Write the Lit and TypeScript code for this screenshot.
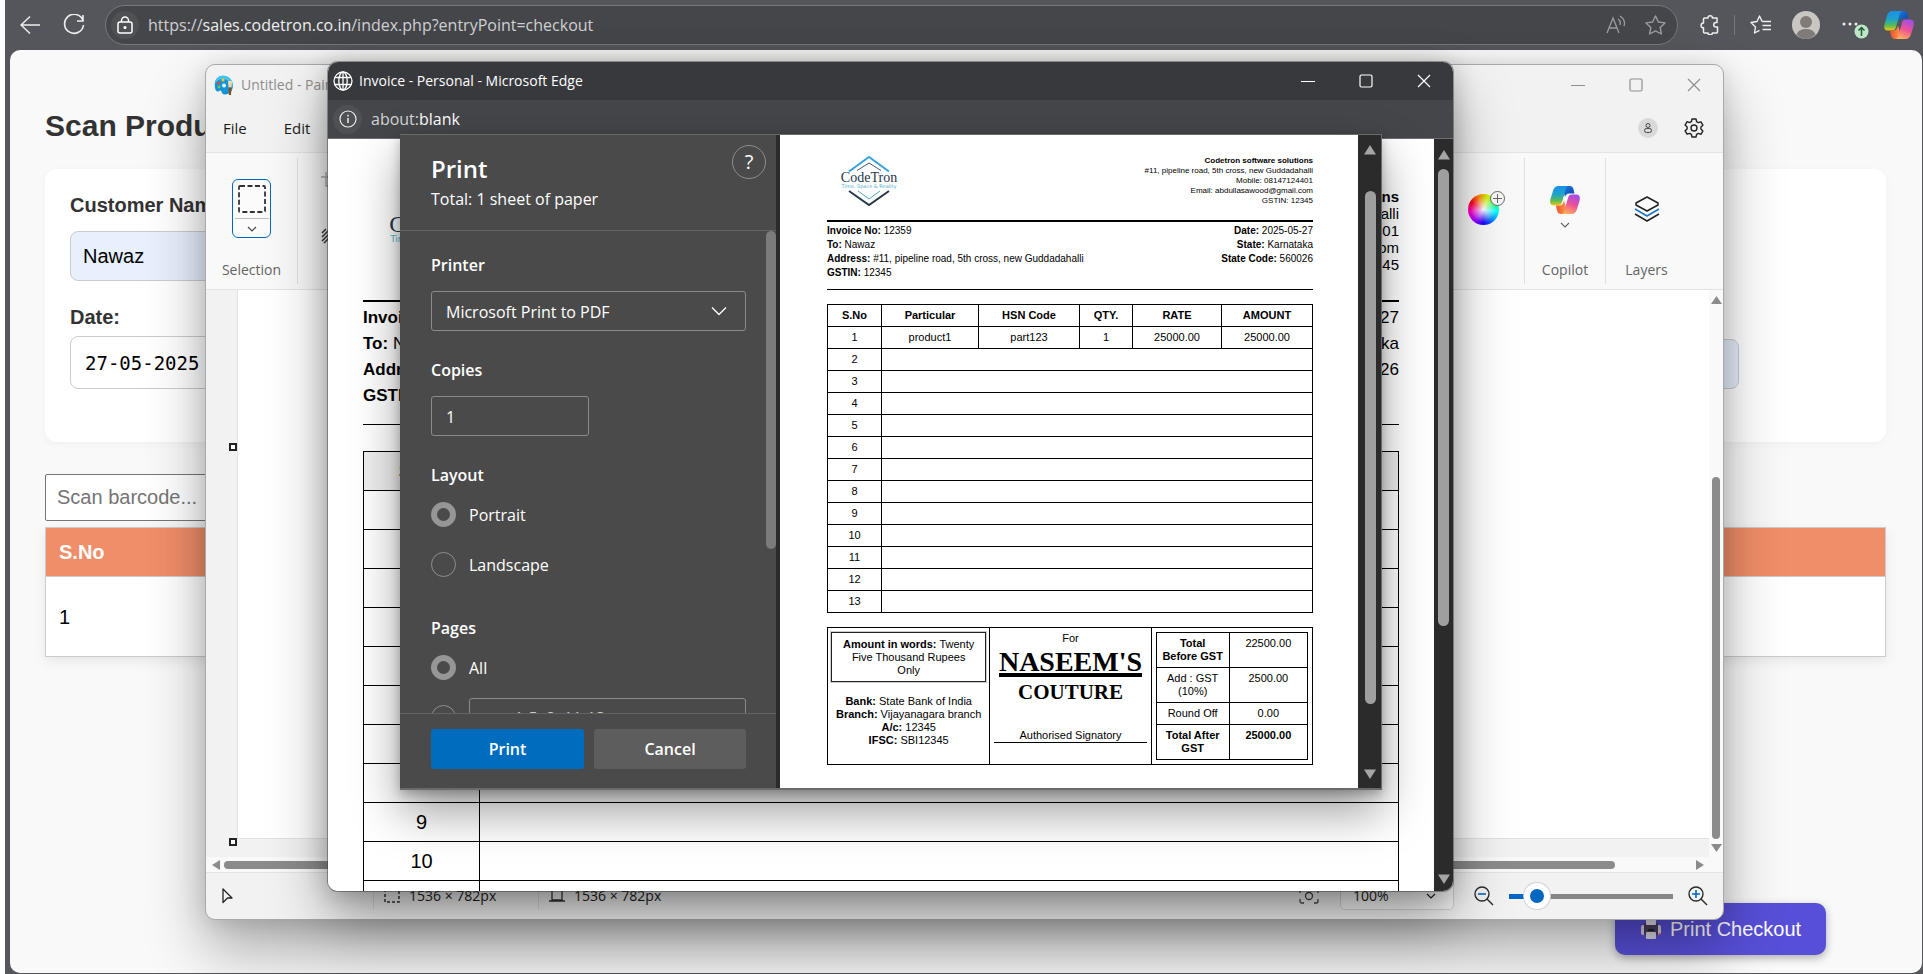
import { LitElement, html, css } from "lit";
import { customElement, property } from "lit/decorators.js";

const UI = css`"Open Sans", "Noto Sans", sans-serif`;
const ARIAL = css`"Liberation Sans", Arial, sans-serif`;

const chevron = html`<svg width="18" height="18" viewBox="0 0 18 18" fill="none" stroke="currentColor" stroke-width="1.3"><path d="M2 5.5l7 7 7-7"/></svg>`;
const smallChevron = html`<svg width="10" height="10" viewBox="0 0 10 10" fill="none" stroke="currentColor" stroke-width="1.2"><path d="M1 3l4 4 4-4"/></svg>`;

const copilot = (id: string) => html`<svg width="30" height="28" viewBox="0 0 30 28">
  <defs>
    <linearGradient id="${id}a" x1="0" y1="0" x2="0" y2="1"><stop offset="0" stop-color="#1a8fe8"/><stop offset=".45" stop-color="#1fa5c4"/><stop offset=".75" stop-color="#5bbb55"/><stop offset="1" stop-color="#f2c811"/></linearGradient>
    <linearGradient id="${id}b" x1=".7" y1="0" x2=".3" y2="1"><stop offset="0" stop-color="#a34be8"/><stop offset=".5" stop-color="#ee5296"/><stop offset="1" stop-color="#ffb357"/></linearGradient>
    <linearGradient id="${id}c" x1="0" y1="0" x2="1" y2="1"><stop offset="0" stop-color="#1a7fe0"/><stop offset="1" stop-color="#0f3fa8"/></linearGradient>
    <linearGradient id="${id}d" x1="0" y1="0" x2="1" y2="0"><stop offset="0" stop-color="#f0512e"/><stop offset="1" stop-color="#ffa24d"/></linearGradient>
  </defs>
  <path fill="url(#${id}c)" d="M12 0h8c3 0 3.600 3 4.500 7.500h-5c-3 0-4 2-4.500 3.500z"/>
  <path fill="url(#${id}a)" d="M9 0h10c-2.500 0-3 2-4 6l-3 10c-.7 2.400-1.600 3.500-4 3.500H4c-4 0-4.300-3-3.500-6.500L3 5C4 1.500 5.500 0 9 0z"/>
  <path fill="url(#${id}d)" d="M18 28h-7c-3.500 0-4-3-5-8.500h3c3.500 0 4-2 5-5z"/>
  <path fill="url(#${id}b)" d="M21 28H11c2.500 0 3-2 4-6l3-10c.7-2.400 1.600-3.500 4-3.500h4c4 0 4.300 3 3.500 6.500L27 23c-1 3.500-2.500 5-6 5z"/>
</svg>`;

const logo = html`<svg class="logo" viewBox="0 0 60 50" role="img" aria-label="CodeTron">
  <g fill="none">
    <path d="M10 15.500L30 1l20 14.500" stroke="#36a3dc" stroke-width="2"/>
    <path d="M18 14.500L30 7l12 7.500" stroke="#44576a" stroke-width="1"/>
    <path d="M10 35l20 14 20-14" stroke="#26384a" stroke-width="2"/>
    <path d="M19 35l11 8 11-8" stroke="#4ba5c9" stroke-width="1"/>
  </g>
  <text x="30" y="26" text-anchor="middle" font-family="Liberation Serif, serif" font-size="14" fill="#26384a">CodeTron</text>
  <text x="30" y="32" text-anchor="middle" font-family="DejaVu Sans, sans-serif" font-size="5" fill="#4fb3cc">Time, Space &amp; Reality</text>
</svg>`;

@customElement("invoice-sheet")
class InvoiceSheet extends LitElement {
  @property({ type: Boolean, reflect: true }) large = false;

  static styles = css`
    :host { display: block; background: #fff; color: #000; font-family: ${ARIAL}; padding: 21px 45px 0 47px; }
    .head { display: flex; justify-content: space-between; border-bottom: 2px solid #000; padding: 0 0 14px 12px; }
    .logo { width: 60px; height: 50px; overflow: visible; }
    .company { text-align: right; font-size: 8px; line-height: 10px; }
    .info { display: flex; justify-content: space-between; font-size: 10px; line-height: 14px; padding: 2px 0 9px 0; border-bottom: 1px solid #000; }
    .right { text-align: right; }
    table { border-collapse: collapse; width: 100%; table-layout: fixed; }
    .items { margin-top: 14px; font-size: 11px; }
    .items th, .items td { border: 1px solid #000; height: 22px; padding: 0; text-align: center; box-sizing: border-box; line-height: 13px; }
    .c1 { width: 54px; } .c2 { width: 97px; } .c3 { width: 101px; } .c4 { width: 53px; } .c5 { width: 89px; }
    .foot { display: grid; grid-template-columns: 1fr 1fr 1fr; margin-top: 14px; border: 1px solid #000; font-size: 11px; line-height: 13px; text-align: center; }
    .foot > div + div { border-left: 1px solid #000; }
    .words { border: 1px solid #222; margin: 4px 3px 13px; padding: 5px 8px 4px; box-shadow: 0 0 0 1px #ccc; }
    .sign { display: flex; flex-direction: column; align-items: center; padding: 4px 4px 0; }
    .brand { font: bold 28px/28px "Liberation Serif", serif; border-bottom: 4px solid #000; height: 25px; margin-top: 3px; }
    .sub { font: bold 21px/26px "Liberation Serif", serif; margin-top: 2px; }
    .auth { align-self: stretch; border-bottom: 1px solid #000; margin-top: 24px; }
    .sums { padding: 4px; font-size: 11px; }
    .sums td, .sums th { border: 1px solid #000; padding: 4px 0; vertical-align: top; }
    .sums th:first-child { padding: 4px 2px; }
    .s1 { width: 73px; }

    :host([large]) { padding: 49px 35px 0 35px; }
    :host([large]) .head { padding: 0 0 27px 23px; }
    :host([large]) .logo { width: 102px; height: 85px; }
    :host([large]) .company { font-size: 15px; line-height: 17px; }
    :host([large]) .info { font-size: 17px; line-height: 26px; padding: 3px 0 15px 0; }
    :host([large]) .items { margin-top: 26px; font-size: 20px; }
    :host([large]) .items th, :host([large]) .items td { height: 39px; line-height: 22px; }
    :host([large]) .items th { background: #efefef; }
    :host([large]) .c1 { width: 116px; }
    :host([large]) .c2, :host([large]) .c3, :host([large]) .c4, :host([large]) .c5 { width: auto; }
  `;

  render() {
    const blanks = Array.from({ length: this.large ? 10 : 12 }, (_, i) => i + 2);
    return html`
      <div class="head">
        ${logo}
        <div class="company"><b>Codetron software solutions</b><br>#11, pipeline road, 5th cross, new Guddadahalli<br>Mobile: 08147124401<br>Email: abdullasawood@gmail.com<br>GSTIN: 12345</div>
      </div>
      <div class="info">
        <div><b>Invoice No:</b> 12359<br><b>To:</b> Nawaz<br><b>Address:</b> #11, pipeline road, 5th cross, new Guddadahalli<br><b>GSTIN:</b> 12345</div>
        <div class="right"><b>Date:</b> 2025-05-27<br><b>State:</b> Karnataka<br><b>State Code:</b> 560026</div>
      </div>
      <table class="items">
        <colgroup><col class="c1"><col class="c2"><col class="c3"><col class="c4"><col class="c5"><col></colgroup>
        <tr><th>S.No</th><th>Particular</th><th>HSN Code</th><th>QTY.</th><th>RATE</th><th>AMOUNT</th></tr>
        <tr><td>1</td><td>product1</td><td>part123</td><td>1</td><td>25000.00</td><td>25000.00</td></tr>
        ${blanks.map((n) => html`<tr><td>${n}</td><td colspan="5"></td></tr>`)}
      </table>
      ${this.large ? "" : html`
        <div class="foot">
          <div>
            <div class="words"><b>Amount in words:</b> Twenty Five Thousand Rupees Only</div>
            <b>Bank:</b> State Bank of India<br><b>Branch:</b> Vijayanagara branch<br><b>A/c:</b> 12345<br><b>IFSC:</b> SBI12345
          </div>
          <div class="sign"><span>For</span><span class="brand">NASEEM'S</span><span class="sub">COUTURE</span><span class="auth">Authorised Signatory</span></div>
          <div class="sums">
            <table>
              <colgroup><col class="s1"><col></colgroup>
              <tr><th>Total<br>Before GST</th><td>22500.00</td></tr>
              <tr><td>Add : GST (10%)</td><td>2500.00</td></tr>
              <tr><td>Round Off</td><td>0.00</td></tr>
              <tr><th>Total After GST</th><th>25000.00</th></tr>
            </table>
          </div>
        </div>`}
    `;
  }
}

const controls = html`
  <div class="controls">
    <button aria-label="Minimize"><svg width="14" height="16" viewBox="0 0 14 16"><path d="M0 8.500h14"/></svg></button>
    <button aria-label="Maximize"><svg width="14" height="16" viewBox="0 0 14 16"><rect x="1" y="2" width="12" height="12" rx="1.500"/></svg></button>
    <button aria-label="Close"><svg width="14" height="16" viewBox="0 0 14 16"><path d="M1 2l12 12M13 2L1 14"/></svg></button>
  </div>`;

const windowStyles = css`
  button { font: inherit; color: inherit; background: none; border: 0; padding: 0; margin: 0; }
  svg { display: block; flex: none; }
  .controls { display: flex; margin-left: auto; }
  .controls button { width: 58px; display: grid; place-items: center; }
  .controls svg { fill: none; stroke: currentColor; stroke-width: 1.2; }
`;

@customElement("print-dialog")
class PrintDialog extends LitElement {
  static styles = [windowStyles, css`
    :host { display: flex; box-sizing: border-box; border: 1px solid #6a6a6a; border-width: 1px 1px 2px 0; background: #2b2b2b; color: #fff; font: 16px/24px ${UI}; }
    .panel { width: 376px; flex: none; background: #4a4a4a; display: flex; flex-direction: column; }
    .top { display: flex; justify-content: space-between; padding: 10px 10px 0 31px; height: 96px; box-sizing: border-box; border-bottom: 1px solid #636363; }
    h1 { font-size: 24px; line-height: 30px; font-weight: 600; margin: 9px 0 0; }
    p { margin: 0; line-height: 30px; }
    .help { width: 34px; height: 34px; border: 1px solid #8d8d8d; border-radius: 50%; font-size: 20px; line-height: 30px; flex: none; }
    .scroll { flex: 1; min-height: 0; overflow: hidden; display: flex; justify-content: space-between; }
    .fields { width: 315px; padding: 22px 0 0 31px; }
    .track { width: 10px; }
    .thumb { width: 10px; height: 318px; border-radius: 5px; background: #7b7b7b; }
    .name { display: block; font-weight: 600; margin: 0 0 14px; padding: 0; }
    fieldset { border: 0; margin: 0; padding: 0; }
    .box { display: block; box-sizing: border-box; height: 40px; width: 100%; border: 1px solid #8b8b8b; border-radius: 3px; background: transparent; color: #fff; font: inherit; padding: 1px 14px 0; appearance: none; outline: 0; margin: 0; }
    .box::placeholder { color: #c8c8c8; opacity: 1; }
    .drop { display: grid; margin-bottom: 27px; }
    .drop > * { grid-area: 1 / 1; }
    .drop svg { justify-self: end; align-self: center; margin-right: 18px; pointer-events: none; }
    .copies { width: 158px; margin-bottom: 27px; }
    .opts { display: flex; flex-direction: column; gap: 25px; }
    .opt { display: flex; align-items: center; gap: 13px; height: 25px; }
    legend.name { margin-bottom: 15px; }
    input[type="radio"] { appearance: none; width: 25px; height: 25px; margin: 0; border: 1px solid #8f8f8f; border-radius: 50%; flex: none; box-sizing: border-box; }
    input[type="radio"]:checked { border: 6px solid #969696; }
    .pages { margin-top: 39px; }
    .foot { display: grid; grid-template-columns: 153px 152px; gap: 10px; padding: 15px 0 19px 31px; border-top: 1px solid #636363; }
    .foot button { height: 40px; border-radius: 3px; background: #5d5d5d; font-weight: 600; }
    .foot .go { background: #006cbe; }
    .preview { flex: 1; min-width: 0; margin-left: 4px; background: #fff; overflow: hidden; }
    .bar { width: 23px; flex: none; display: flex; flex-direction: column; align-items: center; padding: 10px 0 9px 1px; box-sizing: border-box; }
    .grip { width: 11px; flex: 1; border-radius: 6px; background: #9f9f9f; margin: 36px 0 65px; }
  `];

  render() {
    return html`
      <section class="panel">
        <div class="top"><div><h1>Print</h1><p>Total: 1 sheet of paper</p></div><button class="help" aria-label="Help">?</button></div>
        <div class="scroll">
          <div class="fields">
            <label class="name" for="printer">Printer</label>
            <div class="drop"><select class="box" id="printer"><option>Microsoft Print to PDF</option></select>${chevron}</div>
            <label class="name" for="copies">Copies</label>
            <input class="box copies" id="copies" value="1">
            <fieldset>
              <legend class="name">Layout</legend>
              <div class="opts">
                <label class="opt"><input type="radio" name="layout" checked>Portrait</label>
                <label class="opt"><input type="radio" name="layout">Landscape</label>
              </div>
            </fieldset>
            <fieldset class="pages">
              <legend class="name">Pages</legend>
              <div class="opts">
                <label class="opt"><input type="radio" name="pages" checked>All</label>
                <div class="opt"><input type="radio" name="pages" aria-label="Page range"><input class="box" aria-label="Pages" placeholder="e.g. 1-5, 8, 11-13"></div>
              </div>
            </fieldset>
          </div>
          <div class="track"><div class="thumb"></div></div>
        </div>
        <div class="foot"><button class="go">Print</button><button>Cancel</button></div>
      </section>
      <div class="preview"><invoice-sheet></invoice-sheet></div>
      <div class="bar">
        <svg width="12" height="10"><path fill="#a5a5a5" d="M6 0l6 9.500H0z"/></svg>
        <div class="grip"></div>
        <svg width="12" height="10"><path fill="#a5a5a5" d="M6 10l6-9.500H0z"/></svg>
      </div>`;
  }
}

@customElement("popup-window")
class PopupWindow extends LitElement {
  static styles = [windowStyles, css`
    :host { display: flex; flex-direction: column; border-radius: 10px; overflow: hidden; background: #fff; color: #fff; font: 14px/20px ${UI}; }
    .title { display: flex; height: 38px; flex: none; background: #38393d; padding-left: 5px; }
    .title > svg, .title > span { align-self: center; }
    .title > span { margin-left: 6px; }
    .addr { display: flex; align-items: center; height: 39px; flex: none; background: #45464a; border-bottom: 1px solid #6d6e72; padding-left: 5px; font-size: 16px; box-sizing: border-box; }
    .disc { width: 29px; height: 29px; border-radius: 50%; background: #4f5054; display: grid; place-items: center; margin-right: 9px; }
    .dim { color: #d4d4d6; }
    .body { flex: 1; min-height: 0; display: flex; }
    .page { flex: 1; min-width: 0; overflow: hidden; }
    .bar { width: 19px; flex: none; background: #2b2b2b; display: flex; flex-direction: column; align-items: center; padding: 11px 0 7px; box-sizing: border-box; }
    .grip { width: 11px; height: 457px; border-radius: 6px; background: #9f9f9f; margin: 9px 0 auto; }
    print-dialog { position: absolute; inset: 72px 71px 101px 72px; box-shadow: 0 22px 44px rgba(0, 0, 0, 0.38), 0 4px 10px rgba(0, 0, 0, 0.25); }
  `];

  render() {
    return html`
      <div class="title">
        <svg width="20" height="20" viewBox="0 0 20 20" fill="none" stroke="#fff" stroke-width="1.300"><circle cx="10" cy="10" r="9"/><ellipse cx="10" cy="10" rx="4.200" ry="9"/><path d="M2 6.500h16M2 13.500h16M10 1v18"/></svg>
        <span>Invoice - Personal - Microsoft Edge</span>
        ${controls}
      </div>
      <div class="addr">
        <span class="disc"><svg width="18" height="18" viewBox="0 0 18 18" fill="none" stroke="#eee" stroke-width="1.200"><circle cx="9" cy="9" r="8"/><path d="M9 8v5M9 4.800v1.600" stroke-width="1.500"/></svg></span>
        <span class="dim">about:</span><span>blank</span>
      </div>
      <div class="body">
        <div class="page"><invoice-sheet large></invoice-sheet></div>
        <div class="bar">
          <svg width="12" height="10"><path fill="#a5a5a5" d="M6 0l6 9.500H0z"/></svg>
          <div class="grip"></div>
          <svg width="12" height="10"><path fill="#a5a5a5" d="M6 10l6-9.500H0z"/></svg>
        </div>
      </div>
      <print-dialog></print-dialog>`;
  }
}

const magnifier = (plus: boolean) => html`<svg width="20" height="20" viewBox="0 0 20 20" fill="none" stroke="#2b2b2b" stroke-width="1.400"><circle cx="8" cy="8" r="7"/><path d="M13 13l6 6"/><path stroke="#0067c0" stroke-width="1.600" d="${plus ? "M4 8h8M8 4v8" : "M4 8h8"}"/></svg>`;

@customElement("paint-window")
class PaintWindow extends LitElement {
  static styles = [windowStyles, css`
    :host { display: flex; flex-direction: column; box-sizing: border-box; border: 1px solid #a9a9a9; border-radius: 10px; overflow: hidden; background: #f2f2f2; color: #1c1c1c; font: 14px/20px ${UI}; }
    .title { display: flex; height: 39px; flex: none; color: #8e8e8e; padding-left: 8px; }
    .title > svg, .title > span { align-self: center; }
    .title > span { margin-left: 7px; }
    .menu { display: flex; align-items: center; height: 49px; flex: none; padding: 0 19px 0 17px; gap: 37px; font-size: 15px; border-bottom: 1px solid #e4e4e4; box-sizing: border-box; }
    .user { margin-left: auto; width: 20px; height: 20px; border-radius: 50%; background: #d9d9d9; display: grid; place-items: center; }
    .menu .gear { margin-left: -11px; }
    .ribbon { display: flex; height: 137px; flex: none; background: #f9f9f9; border-bottom: 1px solid #e4e4e4; box-sizing: border-box; color: #646464; padding: 5px 0; }
    .group { display: flex; flex-direction: column; align-items: center; border-right: 1px solid #e0e0e0; box-sizing: border-box; padding: 21px 0 4px; width: 81px; }
    .group > span { margin-top: auto; }
    .group.first { width: 92px; }
    .group.last { border: 0; margin-right: 36px; }
    .select { box-sizing: border-box; width: 39px; height: 59px; border: 1px solid #0067c0; border-radius: 6px; display: grid; grid-template-rows: 38px 1fr; place-items: center; color: #444; background: #fbfbfb; }
    .select svg:last-child { border-top: 1px solid #bbb; padding: 5px 12px 3px; }
    .image { width: 40px; margin-left: 23px; padding-top: 14px; display: grid; align-content: start; gap: 38px; }
    .colours { width: 76px; margin-left: auto; border-right: 1px solid #e0e0e0; padding-top: 36px; box-sizing: border-box; padding-left: 19px; }
    .wheel { width: 31px; height: 31px; border-radius: 50%; background: radial-gradient(circle, #fff 0, rgba(255, 255, 255, 0) 60%), conic-gradient(from 20deg, #cf0, #3f6, #0ff, #08f, #20f, #a0f, #f0c, #f02, #f80, #cf0); }
    .add { position: relative; float: right; margin: -3px 19px 0 0; }
    .group.cop { padding-top: 28px; gap: 6px; }
    .group.lay { padding-top: 38px; color: #222; }
    .lay > span { color: #646464; }
    .work { flex: 1; min-height: 0; display: flex; }
    .gutter { width: 31px; flex: none; display: flex; flex-direction: column; align-items: flex-end; justify-content: space-between; padding-top: 153px; }
    .canvasrow { flex: 1; display: flex; flex-direction: column; }
    .canvas { flex: 1; background: #fff; border-left: 1px solid #e2e2e2; border-bottom: 1px solid #e2e2e2; margin-bottom: 18px; }
    .handle { width: 8px; height: 8px; border: 2px solid #222; background: #fff; box-sizing: border-box; }
    .handle.end { margin-bottom: 11px; }
    .vbar { width: 14px; flex: none; display: flex; flex-direction: column; align-items: center; padding: 6px 0 5px; background: #f9f9f9; }
    .vbar .grip { width: 8px; flex: 1; border-radius: 4px; background: #8b8b8b; margin: 173px 0 5px; }
    .hbar { display: flex; align-items: center; height: 15px; flex: none; background: #f9f9f9; border-bottom: 1px solid #e4e4e4; padding: 0 19px 0 6px; gap: 4px; }
    .hbar .grip { height: 8px; flex: 1; border-radius: 4px; background: #8b8b8b; margin-right: 77px; }
    .status { display: flex; align-items: center; height: 46px; flex: none; padding: 0 15px; box-sizing: border-box; }
    .status .size { display: flex; align-items: center; gap: 9px; border-left: 1px solid #ddd; padding: 4px 0 4px 10px; width: 154px; }
    .ptr { width: 152px; }
    .zoom { display: flex; align-items: center; margin-left: auto; }
    .pct { display: grid; width: 114px; margin: 0 20px 8px 21px; }
    .pct > * { grid-area: 1 / 1; }
    .pct select { appearance: none; font: inherit; color: inherit; background: #fafafa; border: 1px solid #d5d5d5; border-radius: 5px; height: 36px; padding: 8px 12px 0; margin: 0; }
    .pct svg { justify-self: end; align-self: center; margin: 8px 18px 0 0; }
    input { appearance: none; width: 164px; height: 26px; margin: 0 15px; background: linear-gradient(to right, #0067c0 28px, #868686 28px) center / 100% 5px no-repeat; }
    input::-webkit-slider-thumb { appearance: none; box-sizing: border-box; width: 26px; height: 26px; border-radius: 50%; border: 6px solid #fff; background: #0067c0; box-shadow: 0 0 0 1px #d2d2d2; }
  `];

  render() {
    return html`
      <div class="title">
        <svg width="20" height="20" viewBox="0 0 20 20"><path fill="#1593d8" d="M11 1C6 -.5 1 3 .8 9c0 4 .5 6.500 2.200 7.500 1.500.6 2-1.500 3.500-1 2 .8.500 4 4.500 4 5 0 8-4 7.800-9C18.600 5.500 16 2 11 1z"/><path fill="#43c3f5" d="M11 1C6 -.5 1 3 .8 9q3-5 8-5t10 6C18.600 5.500 16 2 11 1z"/><circle cx="4.500" cy="8" r="1.600" fill="#e5483d"/><circle cx="9" cy="5" r="1.600" fill="#f8c51c"/><circle cx="5" cy="12" r="1.400" fill="#6ccb4a"/><circle cx="10" cy="10.500" r="2" fill="#e8f6ff"/><path d="M14 6h4l-.5 6.500h-3z" fill="#f4d9a4"/><path d="M14.500 12.500h3L17 20h-2z" fill="#8d4d18"/></svg>
        <span>Untitled - Paint</span>
        ${controls}
      </div>
      <div class="menu">
        <button>File</button><button>Edit</button>
        <span class="user"><svg width="8" height="10" viewBox="0 0 8 10" fill="none" stroke="#444"><circle cx="4" cy="2.500" r="2"/><rect x=".5" y="5.500" width="7" height="4" rx="2"/></svg></span>
        <button class="gear" aria-label="Settings"><svg width="20" height="20" viewBox="0 0 20 20" fill="none" stroke="#222" stroke-width="1.400" stroke-linejoin="round"><path d="M8 1h4l.6 2.700 1.700 1 2.600-.9 2 3.400-2 1.900v1.900l2 1.900-2 3.400-2.600-.9-1.700 1L12 19H8l-.6-2.700-1.700-1-2.600.9-2-3.400 2-1.900V9l-2-1.900 2-3.400 2.600.9 1.700-1z"/><circle cx="10" cy="10" r="3"/></svg></button>
      </div>
      <div class="ribbon">
        <div class="group first">
          <button class="select" aria-label="Selection tool"><svg width="28" height="28" viewBox="0 0 28 28" fill="none" stroke="#333" stroke-width="1.800" stroke-dasharray="5 2.500"><rect x="1" y="1" width="26" height="26" rx="1"/></svg>${smallChevron}</button>
          <span>Selection</span>
        </div>
        <div class="image">
          <svg width="20" height="18" viewBox="0 0 20 18" fill="none" stroke="#aaa" stroke-width="1.400"><path d="M0 5h15v12M5 0v14h14"/></svg>
          <svg width="20" height="16" viewBox="0 0 20 16" stroke="#333" stroke-width="1.500"><path d="M1 5l4-4M1 9l8-8M1 13L13 1M3 15L17 1"/></svg>
        </div>
        <div class="colours">
          <svg class="add" width="15" height="15" viewBox="0 0 15 15" fill="#f9f9f9" stroke="#666"><circle cx="7.500" cy="7.500" r="7"/><path d="M7.500 3v9M3 7.500h9"/></svg>
          <div class="wheel"></div>
        </div>
        <div class="group cop">${copilot("p")}${smallChevron}<span>Copilot</span></div>
        <div class="group last lay">
          <svg width="26" height="26" viewBox="0 0 26 26" fill="none" stroke-width="1.500" stroke-linejoin="round"><path stroke="#222" d="M13 1l11 6v2l-11 6L2 9V7z"/><path stroke="#1a73c9" d="M1 13l12 7 12-7"/><path stroke="#222" d="M1 18l12 7 12-7"/></svg>
          <span>Layers</span>
        </div>
      </div>
      <div class="work">
        <div class="gutter"><div class="handle"></div><div class="handle end"></div></div>
        <div class="canvasrow"><div class="canvas"></div></div>
        <div class="vbar">
          <svg width="11" height="8"><path fill="#8b8b8b" d="M5.500 0L11 8H0z"/></svg><div class="grip"></div><svg width="11" height="8"><path fill="#8b8b8b" d="M5.500 8L11 0H0z"/></svg>
        </div>
      </div>
      <div class="hbar"><svg width="8" height="10"><path fill="#8b8b8b" d="M0 5l8-5v10z"/></svg><div class="grip"></div><svg width="8" height="10"><path fill="#8b8b8b" d="M8 5L0 0v10z"/></svg></div>
      <div class="status">
        <div class="ptr"><svg width="14" height="16" viewBox="0 0 14 16" fill="none" stroke="#222" stroke-width="1.300" stroke-linejoin="round"><path d="M2 1l9 9H6.500L2 14.500z"/></svg></div>
        <div class="size"><svg width="16" height="14" viewBox="0 0 16 14" fill="none" stroke="#333" stroke-width="1.500" stroke-dasharray="3 2"><rect x="1" y="1" width="14" height="12"/></svg>1536 × 782px</div>
        <div class="size"><svg width="16" height="14" viewBox="0 0 16 14" fill="none" stroke="#333" stroke-width="1.300"><path d="M3 0v11h10V0M0 12h16"/></svg>1536 × 782px</div>
        <div class="zoom">
          <svg width="20" height="16" viewBox="0 0 20 16" fill="none" stroke="#444" stroke-width="1.300"><circle cx="10" cy="8" r="3.500"/><path d="M1 5V3q0-2 2-2h2M15 1h2q2 0 2 2v2M19 11v2q0 2-2 2h-2M5 15H3q-2 0-2-2v-2"/></svg>
          <div class="pct"><select aria-label="Zoom level"><option>100%</option></select>${smallChevron}</div>
          ${magnifier(false)}<input type="range" min="0" max="100" value="11" aria-label="Zoom">${magnifier(true)}
        </div>
      </div>`;
  }
}

@customElement("app-root")
class AppRoot extends LitElement {
  static styles = [windowStyles, css`
    :host { display: flex; flex-direction: column; position: relative; height: 100vh; overflow: hidden; background: #55565b; border-left: 5px solid #fff; box-sizing: border-box; font: 20px/24px ${ARIAL}; }
    .toolbar { display: flex; align-items: center; height: 50px; flex: none; color: #eee; padding: 0 9px 0 15px; font: 16px/24px ${UI}; }
    .reload { margin: 0 20px 0 23px; }
    .url { flex: 1; display: flex; align-items: center; height: 40px; box-sizing: border-box; border: 1px solid #77787c; border-radius: 20px; background: #45464a; padding: 0 11px 0 5px; }
    .lock { width: 28px; height: 28px; border-radius: 50%; background: #505155; display: grid; place-items: center; margin-right: 9px; }
    .dim { color: #d0d0d2; }
    .star { margin-left: 19px; }
    .read { margin-left: auto; }
    .tools { display: flex; align-items: center; margin-left: 22px; }
    .sep { width: 1px; height: 20px; background: #77787c; margin: 0 15px 0 14px; }
    .avatar { margin: 0 22px 0 21px; }
    .more { margin-right: 15px; }
    .page { flex: 1; min-height: 0; margin: 0 1px 1px 5px; background: #f9f9f9; border-radius: 10px; overflow: hidden; padding: 58px 36px 0 35px; position: relative; }
    h1 { font-size: 30px; line-height: 36px; color: #333; margin: 0 0 25px; }
    .card { display: grid; grid-template-columns: 1fr 1fr; gap: 24px; background: #fff; border-radius: 12px; box-shadow: 0 2px 8px rgba(0, 0, 0, 0.04); padding: 24px 147px 53px 25px; color: #333; }
    .field { display: flex; flex-direction: column; gap: 14px; font-weight: bold; }
    .field input { font: 20px/24px ${ARIAL}; padding: 12px; border: 1px solid #ccc; border-radius: 8px; box-sizing: border-box; height: 50px; color: #000; background: #e8f0fe; margin: 0; }
    .date { grid-column: 1; gap: 7px; }
    .field .day { height: 53px; background: #fff; font: 19px/24px "DejaVu Sans Mono", monospace; padding: 12px 14px; }
    .other { justify-content: flex-end; }
    .scan { display: block; margin: 32px 0 6px; width: 300px; height: 47px; box-sizing: border-box; border: 1px solid #767676; border-radius: 2px; padding: 0 11px; font: inherit; background: #fff; }
    .scan::placeholder { color: #757575; }
    table { width: 100%; border-collapse: collapse; background: #fff; border: 1px solid #ccc; box-shadow: 0 4px 12px rgba(0, 0, 0, 0.08); text-align: left; }
    th { background: #f08e69; color: #fff; height: 48px; padding: 0 13px; border-bottom: 1px solid #ccc; }
    td { height: 79px; padding: 0 13px; }
    .checkout { position: absolute; right: 96px; bottom: 18px; width: 211px; height: 52px; display: flex; align-items: center; gap: 9px; padding: 0 24px 0 26px; background: #584fd8; color: #fff; border-radius: 10px; box-shadow: 0 3px 8px rgba(0, 0, 0, 0.3); white-space: nowrap; }
    paint-window { position: absolute; inset: 64px 199px 54px 200px; box-shadow: 0 30px 60px rgba(0, 0, 0, 0.32), 0 2px 24px rgba(0, 0, 0, 0.12); }
    popup-window { position: absolute; inset: 62px 470px 83px 323px; box-shadow: 0 30px 60px rgba(0, 0, 0, 0.36), 0 4px 26px rgba(0, 0, 0, 0.24), 0 0 0 1px rgba(90, 90, 90, 0.5); }
  `];

  render() {
    return html`
      <header class="toolbar">
        <button aria-label="Back"><svg width="20" height="20" viewBox="0 0 20 20" fill="none" stroke="currentColor" stroke-width="1.500"><path d="M20 10H1M10 1.500L1 10l9 8.500"/></svg></button>
        <button class="reload" aria-label="Refresh"><svg width="22" height="22" viewBox="0 0 22 22" fill="none" stroke="currentColor" stroke-width="1.600"><path d="M20 6.500A9.500 9.500 0 1 0 20.500 11M20 1v6h-6"/></svg></button>
        <div class="url">
          <span class="lock"><svg width="16" height="18" viewBox="0 0 16 18" fill="none" stroke="#fff" stroke-width="1.500"><rect x="1" y="6" width="14" height="11" rx="2"/><path d="M4.500 6V4.500a3.500 3.500 0 0 1 7 0V6"/><circle cx="8" cy="11.500" r=".8" fill="#fff"/></svg></span>
          <span class="dim">https://</span><span>sales.codetron.co.in</span><span class="dim">/index.php?entryPoint=checkout</span>
          <svg class="read" width="20" height="20" viewBox="0 0 20 20" fill="none" stroke="#9b9c9f" stroke-width="1.300"><path d="M1 18L7 3l6 15M3 13h8M12 4q3 2 2 6M14 1q6 4 4 10"/></svg>
          <svg class="star" width="21" height="20" viewBox="0 0 21 20" fill="none" stroke="#9b9c9f" stroke-width="1.400" stroke-linejoin="round"><path d="M10.500 1l2.900 6 6.600.9-4.800 4.600 1.200 6.500-5.900-3.100L4.600 19l1.200-6.500L1 7.900 7.600 7z"/></svg>
        </div>
        <div class="tools">
          <svg width="20" height="20" viewBox="0 0 20 20" fill="none" stroke="currentColor" stroke-width="1.500" stroke-linejoin="round"><path d="M4.500 3H8a2.200 2.200 0 0 1 4.400 0H17v4.500h-1a2.300 2.300 0 0 0 0 4.600h1.500V17q0 1-1 1H12.400a2.200 1.800 0 0 1-4.400 0H4.500q-1 0-1-1v-4.200a2.300 2.300 0 0 1 0-4.800V4q0-1 1-1z"/></svg>
          <span class="sep"></span>
          <svg width="21" height="20" viewBox="0 0 21 20" fill="none" stroke="currentColor" stroke-width="1.400" stroke-linejoin="round"><path d="M13.500 6.500L12 6.300 9.500 1 7 6.500 1 7.500l4.500 4.400L4.500 18l5-2.700M13.500 6.500H21M12.500 10.500H21M12.500 14.500H21"/></svg>
          <svg class="avatar" width="28" height="28" viewBox="0 0 28 28"><circle cx="14" cy="14" r="14" fill="#c9c6c3"/><circle cx="14" cy="11" r="6" fill="#7f7b78"/><path fill="#7f7b78" d="M4.500 23.500q2-5.500 9.500-5.500t9.500 5.500Q19 28 14 28t-9.500-4.500z"/></svg>
          <svg class="more" width="27" height="30" viewBox="0 0 27 30"><g fill="#eee"><circle cx="2" cy="14" r="1.500"/><circle cx="8" cy="14" r="1.500"/><circle cx="14" cy="14" r="1.500"/></g><circle cx="19.500" cy="21.500" r="7" fill="#bfe6c8"/><path d="M19.500 26v-8M16.500 20.500l3-3 3 3" fill="none" stroke="#245a33" stroke-width="1.500"/></svg>
          ${copilot("t")}
        </div>
      </header>
      <main class="page">
        <h1>Scan Products</h1>
        <section class="card">
          <div class="field"><label for="cust">Customer Name:</label><input id="cust" value="Nawaz"></div>
          <div class="field date"><label for="day">Date:</label><input class="day" id="day" value="27-05-2025"></div>
          <div class="field other"><input aria-label="State code"></div>
        </section>
        <input class="scan" aria-label="Barcode" placeholder="Scan barcode...">
        <table><tr><th>S.No</th></tr><tr><td>1</td></tr></table>
        <button class="checkout"><svg width="20" height="20" viewBox="0 0 20 20"><rect x="0" y="6" width="20" height="10" rx="2" fill="#d5d2dc"/><rect x="3" y="4" width="14" height="12" fill="#4b3f63"/><rect x="5" y="0" width="10" height="6" rx="1" fill="#e6e3ec"/><rect x="5" y="13" width="10" height="7" rx="1" fill="#dcd8e4"/><path d="M7 11h6" stroke="#222" stroke-width="2"/><circle cx="18.500" cy="15" r="1" fill="#e35"/></svg>Print Checkout</button>
      </main>
      <paint-window></paint-window>
      <popup-window></popup-window>`;
  }
}
